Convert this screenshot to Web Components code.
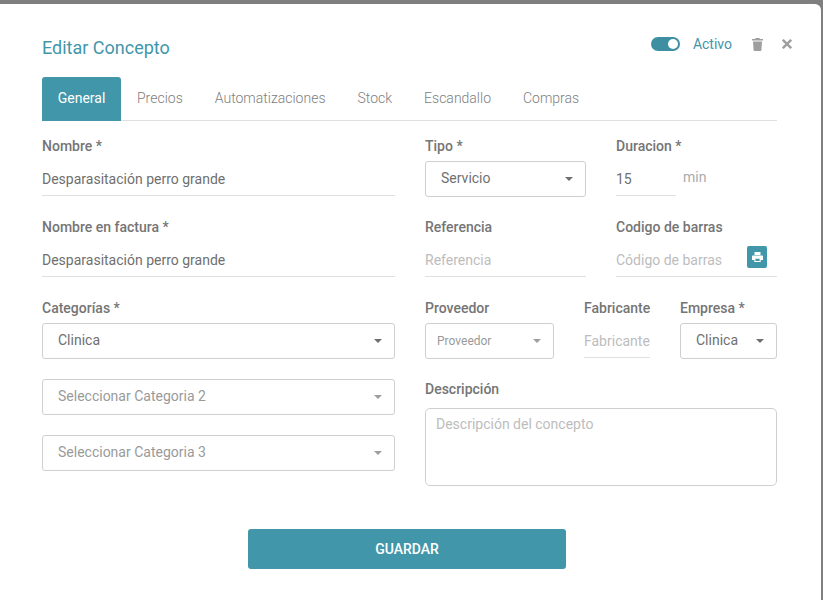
<!DOCTYPE html>
<html lang="es">
<head>
<meta charset="utf-8">
<title>Editar Concepto</title>
<style>
    html, body {
        margin: 0;
        height: 100%;
        background-color: #7f7f7f;
        overflow: hidden;
    }
    body {
        font-family: Roboto, "Liberation Sans", sans-serif;
        font-size: 14px;
        color: #757575;
    }
</style>
</head>
<body>
<concept-dialog>
    <span slot="title">Editar Concepto</span>
    <concept-tabs></concept-tabs>
    <div style="display:grid;grid-template-columns:353px 352px;column-gap:30px;padding-top:15px">
        <div>
            <form-field label="Nombre *"><text-input value="Desparasitación perro grande"></text-input></form-field>
            <form-field label="Nombre en factura *"><text-input value="Desparasitación perro grande"></text-input></form-field>
            <form-field label="Categorías *"><select-box value="Clinica"></select-box></form-field>
            <select-box placeholder value="Seleccionar Categoria 2" style="margin-bottom:20px"></select-box>
            <select-box placeholder value="Seleccionar Categoria 3"></select-box>
        </div>
        <div>
            <div style="display:grid;grid-template-columns:161px 161px;column-gap:30px">
                <form-field label="Tipo *"><select-box value="Servicio"></select-box></form-field>
                <form-field label="Duracion *">
                    <div style="display:flex;gap:7px">
                        <text-input value="15" style="width:60px"></text-input>
                        <span style="color:#aaa;line-height:32px">min</span>
                    </div>
                </form-field>
                <form-field label="Referencia"><text-input placeholder value="Referencia"></text-input></form-field>
                <form-field label="Codigo de barras">
                    <text-input placeholder value="Código de barras"><print-button></print-button></text-input>
                </form-field>
            </div>
            <div style="display:grid;grid-template-columns:129px 66px 97px;column-gap:30px">
                <form-field label="Proveedor"><select-box small placeholder value="Proveedor"></select-box></form-field>
                <form-field label="Fabricante"><text-input placeholder value="Fabricante"></text-input></form-field>
                <form-field label="Empresa *"><select-box value="Clinica"></select-box></form-field>
            </div>
            <form-field label="Descripción" tight><text-area placeholder="Descripción del concepto"></text-area></form-field>
        </div>
    </div>
    <save-button>GUARDAR</save-button>
</concept-dialog>

<script>
class ConceptDialog extends HTMLElement {
    constructor() {
        super();
        this.attachShadow({ mode: 'open' });
        this.shadowRoot.innerHTML = `
            <style>
                :host {
                    display: block;
                    box-sizing: border-box;
                    width: 821px;
                    height: 596px;
                    margin-top: 4px;
                    padding: 0 44px 0 42px;
                    background-color: #fff;
                    border-radius: 0 6px 0 0;
                }
                .head {
                    display: flex;
                    align-items: center;
                    height: 73px;
                    padding-top: 15px;
                    box-sizing: border-box;
                    color: #4296a9;
                }
                .title {
                    flex: 1;
                    font-size: 18px;
                    line-height: 28px;
                }
                .actions {
                    display: flex;
                    align-items: center;
                    margin-right: -15px;
                    margin-top: -8px;
                }
                .active {
                    margin: 0 20px 0 13px;
                    line-height: 16px;
                }
                svg { display: block; }
                .close { margin-left: 19px; }
            </style>
            <div class="head">
                <div class="title"><slot name="title"></slot></div>
                <div class="actions">
                    <toggle-switch></toggle-switch>
                    <span class="active">Activo</span>
                    <svg width="11" height="13" viewBox="0 0 11 13"><path fill="#9e9e9e" d="M3.6 0h3.8l.5 1H11v1.5H0V1h3.1zM1 3.5h9l-.6 8.4c0 .6-.5 1.1-1.1 1.1H2.7c-.6 0-1.1-.5-1.1-1.1z"/></svg>
                    <svg class="close" width="10" height="10" viewBox="0 0 10 10"><path stroke="#9e9e9e" stroke-width="2.4" d="M.8.8l8.4 8.4M9.2.8L.8 9.2"/></svg>
                </div>
            </div>
            <slot></slot>
        `;
    }
}

class ConceptTabs extends HTMLElement {
    constructor() {
        super();
        this.attachShadow({ mode: 'open' });
        const tabs = ['General', 'Precios', 'Automatizaciones', 'Stock', 'Escandallo', 'Compras'];
        this.shadowRoot.innerHTML = `
            <style>
                :host {
                    display: flex;
                    height: 44px;
                    box-sizing: border-box;
                    border-bottom: 1px solid #e0e0e0;
                }
                div {
                    padding: 0 16px;
                    height: 44px;
                    line-height: 43px;
                    color: #808080;
                    font-weight: 300;
                }
                .on {
                    box-sizing: border-box;
                    width: 79px;
                    padding: 0;
                    text-align: center;
                    background-color: #4296a9;
                    color: #fff;
                    font-weight: 400;
                    border-radius: 3px 3px 0 0;
                }
            </style>
            ${tabs.map((t, i) => `<div class="${i === 0 ? 'on' : ''}">${t}</div>`).join('')}
        `;
    }
}

class FormField extends HTMLElement {
    constructor() {
        super();
        this.attachShadow({ mode: 'open' });
        this.shadowRoot.innerHTML = `
            <style>
                :host {
                    display: flow-root;
                    margin-bottom: 20px;
                }
                :host([tight]) { margin-bottom: 0; }
                label {
                    display: block;
                    height: 20px;
                    line-height: 20px;
                    margin-bottom: 5px;
                    font-weight: 500;
                    color: #757575;
                    white-space: nowrap;
                }
                :host([tight]) label { margin-bottom: 9px; }
            </style>
            <label>${this.getAttribute('label')}</label>
            <slot></slot>
        `;
    }
}

class TextInput extends HTMLElement {
    constructor() {
        super();
        this.attachShadow({ mode: 'open' });
        this.shadowRoot.innerHTML = `
            <style>
                :host {
                    display: flex;
                    position: relative;
                    box-sizing: border-box;
                    height: 35px;
                    margin-bottom: 1px;
                    border-bottom: 1px solid #e0e0e0;
                    line-height: 37px;
                    color: #6f6f6f;
                    white-space: nowrap;
                }
                :host([placeholder]) { color: #bdbdbd; }
                span { flex: 1; }
            </style>
            <span>${this.getAttribute('value')}</span>
            <slot></slot>
        `;
    }
}

class SelectBox extends HTMLElement {
    constructor() {
        super();
        this.attachShadow({ mode: 'open' });
        this.shadowRoot.innerHTML = `
            <style>
                :host {
                    display: flex;
                    align-items: center;
                    box-sizing: border-box;
                    height: 36px;
                    padding: 0 12px 0 15px;
                    background-color: #fff;
                    border: 1px solid #cfcfcf;
                    border-radius: 3px;
                    color: #6f6f6f;
                    white-space: nowrap;
                }
                :host([placeholder]) { color: #9a9a9a; }
                :host([small]) { font-size: 12px; padding-left: 11px; }
                span { flex: 1; margin-top: -2px; }
                :host([small]) span { margin-top: 0; }
                i {
                    border: 4.5px solid transparent;
                    border-top: 4.5px solid #6f6f6f;
                    border-bottom: 0;
                }
                :host([placeholder]) i { border-top-color: #9e9e9e; }
            </style>
            <span>${this.getAttribute('value')}</span>
            <i></i>
        `;
    }
}

class TextArea extends HTMLElement {
    constructor() {
        super();
        this.attachShadow({ mode: 'open' });
        this.shadowRoot.innerHTML = `
            <style>
                :host {
                    display: block;
                    box-sizing: border-box;
                    height: 78px;
                    padding: 6px 10px;
                    border: 1px solid #cfcfcf;
                    border-radius: 5px;
                    color: #bdbdbd;
                    line-height: 18px;
                }
            </style>
            ${this.getAttribute('placeholder')}
        `;
    }
}

class ToggleSwitch extends HTMLElement {
    constructor() {
        super();
        this.attachShadow({ mode: 'open' });
        this.shadowRoot.innerHTML = `
            <style>
                :host {
                    display: block;
                    position: relative;
                    width: 29px;
                    height: 14px;
                    background-color: #3f8fa3;
                    border-radius: 7px;
                }
                i {
                    position: absolute;
                    top: 2px;
                    right: 2px;
                    width: 10px;
                    height: 10px;
                    border-radius: 50%;
                    background-color: #fff;
                }
            </style>
            <i></i>
        `;
    }
}

class PrintButton extends HTMLElement {
    constructor() {
        super();
        this.attachShadow({ mode: 'open' });
        this.shadowRoot.innerHTML = `
            <style>
                :host {
                    display: flex;
                    align-items: center;
                    justify-content: center;
                    position: absolute;
                    top: 4px;
                    right: 10px;
                    width: 20px;
                    height: 22px;
                    background-color: #4296a9;
                    border-radius: 2px;
                }
            </style>
            <svg width="11" height="10" viewBox="0 0 11 10"><path fill="#fff" d="M2.5 0h6v3h-6zM1 3.5h9c.6 0 1 .4 1 1V8H8.7v2H2.3V8H0V4.5c0-.6.4-1 1-1zm2.4 3.2v2.2h4.2V6.7z"/></svg>
        `;
    }
}

class SaveButton extends HTMLElement {
    constructor() {
        super();
        this.attachShadow({ mode: 'open' });
        this.shadowRoot.innerHTML = `
            <style>
                :host {
                    display: block;
                    width: 318px;
                    height: 40px;
                    margin: 43px 0 0 206px;
                    background-color: #4296a9;
                    border-radius: 3px;
                    color: #fff;
                    font-weight: 500;
                    line-height: 40px;
                    text-align: center;
                }
            </style>
            <slot></slot>
        `;
    }
}

customElements.define('concept-dialog', ConceptDialog);
customElements.define('concept-tabs', ConceptTabs);
customElements.define('form-field', FormField);
customElements.define('text-input', TextInput);
customElements.define('select-box', SelectBox);
customElements.define('text-area', TextArea);
customElements.define('toggle-switch', ToggleSwitch);
customElements.define('print-button', PrintButton);
customElements.define('save-button', SaveButton);
</script>
</body>
</html>
